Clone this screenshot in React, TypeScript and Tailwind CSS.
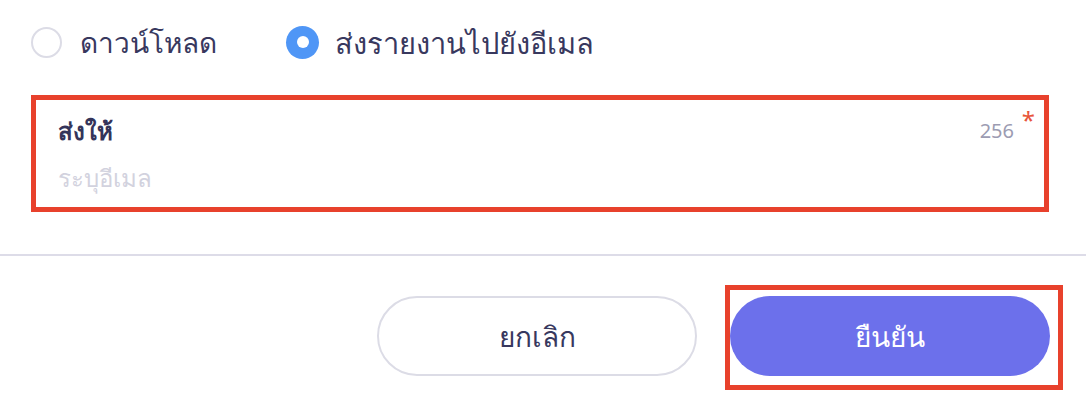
export default function App() {
  return (
    <div className="h-[400px] w-[1086px] bg-white font-['Noto_Sans','DejaVu_Sans',sans-serif] text-[#38385e]">
      <div className="px-[31px]">
        {/* delivery method */}
        <div className="flex h-[84px] items-center">
          <label className="flex items-center gap-[18px]">
            <span className="size-[31px] rounded-full border-2 border-[#dcdce6] bg-white" />
            <span className="text-[28px] leading-none">ดาวน์โหลด</span>
          </label>
          <label className="ml-[69px] flex items-center gap-[16px]">
            <span className="flex size-[33px] items-center justify-center rounded-full bg-[#4f96f6]">
              <span className="size-[12px] rounded-full bg-white" />
            </span>
            <span className="text-[29px] leading-none">ส่งรายงานไปยังอีเมล</span>
          </label>
        </div>

        {/* recipient */}
        <div className="relative mt-[11px] flex h-[117px] w-[1018px] flex-col border-[5px] border-[#e8412c] pl-[22px] pr-[30px] pt-[19px]">
          <div className="flex items-center justify-between">
            <span className="text-[24px] font-bold leading-none text-[#34345a]">ส่งให้</span>
            <span className="text-[20px] leading-none text-[#9c9cb2]">256</span>
          </div>
          <span className="mt-[23px] text-[24px] leading-none text-[#d2d2de]">ระบุอีเมล</span>
          <span className="absolute right-[9px] top-[8px] text-[24px] leading-none text-[#e8553a]">*</span>
        </div>
      </div>

      <div className="mt-[42px] border-t-2 border-[#dddce8]" />

      {/* actions */}
      <div className="mt-[29px] flex items-start justify-end pr-[23px]">
        <button className="mt-[11px] flex h-[80px] w-[320px] items-center justify-center rounded-full border-2 border-[#dcdce6] bg-white text-[28px] font-normal text-[#38385e]">
          ยกเลิก
        </button>
        <div className="ml-[28px] border-[5px] border-[#e8412c] pb-[9px] pr-[8px] pt-[6px]">
          <button className="flex h-[80px] w-[320px] items-center justify-center rounded-full bg-[#6c70eb] text-[28px] font-normal text-white">
            ยืนยัน
          </button>
        </div>
      </div>
    </div>
  );
}
